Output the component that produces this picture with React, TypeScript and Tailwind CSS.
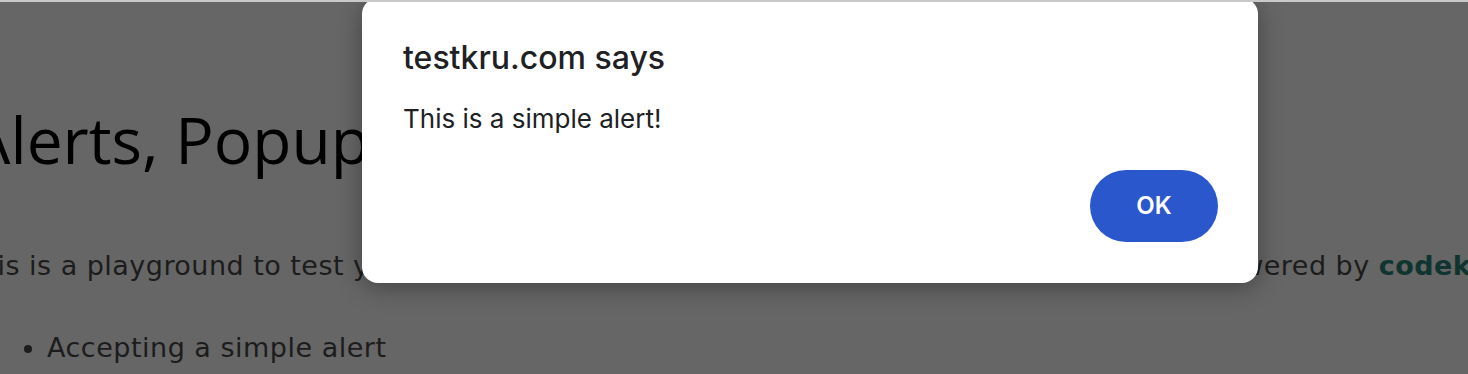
export default function App() {
    return (
        <div className="relative h-[374px] w-[1468px] overflow-hidden border-t-2 border-[#c9c9c9] bg-[#666666]">
            {/* page behind the alert, scrolled a little to the right */}
            <div className="-ml-[30px] whitespace-nowrap">
                <h1 className="pt-[98px] font-['Open_Sans',sans-serif] text-[64px] font-normal leading-[80px] text-black">
                    Alerts, Popups and Windows
                </h1>
                <p className="mt-[68px] -ml-[7px] font-['DejaVu_Sans',sans-serif] text-[27px] leading-[36px] tracking-[0.47px] text-[#1c1c1c]">
                    This is a playground to test your automation scripts on alerts, popups and windows. It is powered by{' '}
                    <span className="font-bold text-[#103530]">codekru</span>
                </p>
                <ul className="mt-[46px] list-disc pl-[77px] font-['DejaVu_Sans',sans-serif] text-[27px] leading-[36px] tracking-[0.5px] text-[#1c1c1c]">
                    <li>Accepting a simple alert</li>
                </ul>
            </div>

            {/* browser alert dialog */}
            <div className="absolute left-[362px] top-[-4px] flex h-[285px] w-[896px] flex-col rounded-2xl bg-white pl-[41px] pr-[40px] pt-[40px] font-['Inter',sans-serif] shadow-[0_4px_24px_rgba(0,0,0,0.35)]">
                <div className="text-[32px] font-medium leading-[40px] text-[#202124]">testkru.com says</div>
                <div className="mt-[24px] text-[26px] leading-[34px] text-[#202124]">This is a simple alert!</div>
                <div className="mt-auto mb-[41px] flex justify-end">
                    <button className="h-[72px] w-[128px] rounded-full bg-[#2a58cc] text-[24px] font-semibold text-white">
                        OK
                    </button>
                </div>
            </div>
        </div>
    );
}
